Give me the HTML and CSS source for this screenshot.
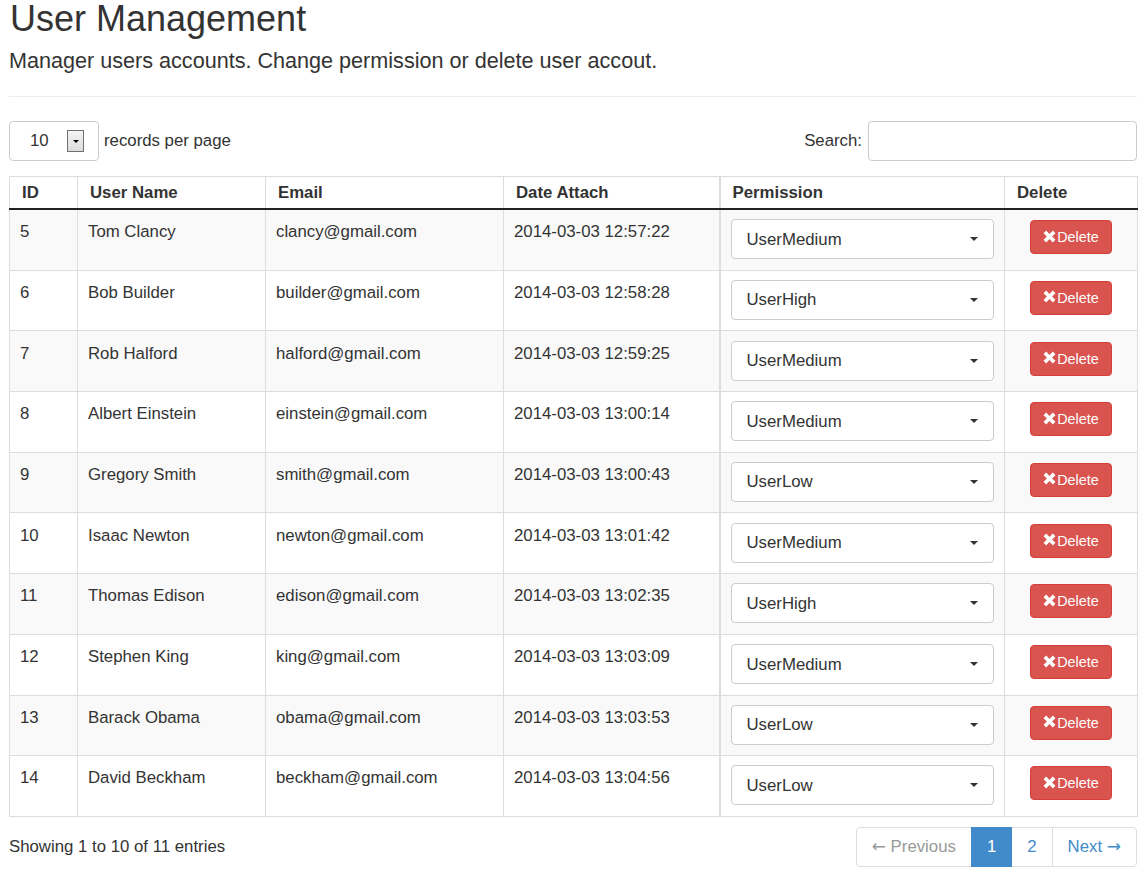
FILE: index.html
```html
<!DOCTYPE html>
<html>
<head>
<meta charset="utf-8">
<title>User Management</title>
<link rel="stylesheet" href="styles.css">
</head>
<body>
<div class="page">
  <h1 class="title">User Management</h1>
  <p class="lead">Manager users accounts. Change permission or delete user accout.</p>
  <hr class="divider">

  <div class="controls">
    <div class="length">
      <div class="length-select">
        <span class="length-value">10</span>
        <span class="length-btn"><span class="mini-caret"></span></span>
      </div>
      <span class="length-label">records per page</span>
    </div>
    <div class="search">
      <label class="search-label">Search:</label>
      <input class="search-input" type="text">
    </div>
  </div>

  <table class="users">
    <colgroup>
      <col class="c-id"><col class="c-name"><col class="c-email"><col class="c-date"><col class="c-perm"><col class="c-del">
    </colgroup>
    <thead>
      <tr><th>ID</th><th>User Name</th><th>Email</th><th>Date Attach</th><th class="perm">Permission</th><th>Delete</th></tr>
    </thead>
    <tbody>
      <tr><td>5</td><td>Tom Clancy</td><td>clancy@gmail.com</td><td>2014-03-03 12:57:22</td><td class="perm"><div class="pselect"><span>UserMedium</span><span class="caret"></span></div></td><td class="del"><button class="btn-del"><svg class="x" viewBox="0 0 12 12"><path d="M0.5 2.9 L2.9 0.5 L6 3.6 L9.1 0.5 L11.5 2.9 L8.4 6 L11.5 9.1 L9.1 11.5 L6 8.4 L2.9 11.5 L0.5 9.1 L3.6 6 Z"/></svg>Delete</button></td></tr>
      <tr><td>6</td><td>Bob Builder</td><td>builder@gmail.com</td><td>2014-03-03 12:58:28</td><td class="perm"><div class="pselect"><span>UserHigh</span><span class="caret"></span></div></td><td class="del"><button class="btn-del"><svg class="x" viewBox="0 0 12 12"><path d="M0.5 2.9 L2.9 0.5 L6 3.6 L9.1 0.5 L11.5 2.9 L8.4 6 L11.5 9.1 L9.1 11.5 L6 8.4 L2.9 11.5 L0.5 9.1 L3.6 6 Z"/></svg>Delete</button></td></tr>
      <tr><td>7</td><td>Rob Halford</td><td>halford@gmail.com</td><td>2014-03-03 12:59:25</td><td class="perm"><div class="pselect"><span>UserMedium</span><span class="caret"></span></div></td><td class="del"><button class="btn-del"><svg class="x" viewBox="0 0 12 12"><path d="M0.5 2.9 L2.9 0.5 L6 3.6 L9.1 0.5 L11.5 2.9 L8.4 6 L11.5 9.1 L9.1 11.5 L6 8.4 L2.9 11.5 L0.5 9.1 L3.6 6 Z"/></svg>Delete</button></td></tr>
      <tr><td>8</td><td>Albert Einstein</td><td>einstein@gmail.com</td><td>2014-03-03 13:00:14</td><td class="perm"><div class="pselect"><span>UserMedium</span><span class="caret"></span></div></td><td class="del"><button class="btn-del"><svg class="x" viewBox="0 0 12 12"><path d="M0.5 2.9 L2.9 0.5 L6 3.6 L9.1 0.5 L11.5 2.9 L8.4 6 L11.5 9.1 L9.1 11.5 L6 8.4 L2.9 11.5 L0.5 9.1 L3.6 6 Z"/></svg>Delete</button></td></tr>
      <tr><td>9</td><td>Gregory Smith</td><td>smith@gmail.com</td><td>2014-03-03 13:00:43</td><td class="perm"><div class="pselect"><span>UserLow</span><span class="caret"></span></div></td><td class="del"><button class="btn-del"><svg class="x" viewBox="0 0 12 12"><path d="M0.5 2.9 L2.9 0.5 L6 3.6 L9.1 0.5 L11.5 2.9 L8.4 6 L11.5 9.1 L9.1 11.5 L6 8.4 L2.9 11.5 L0.5 9.1 L3.6 6 Z"/></svg>Delete</button></td></tr>
      <tr><td>10</td><td>Isaac Newton</td><td>newton@gmail.com</td><td>2014-03-03 13:01:42</td><td class="perm"><div class="pselect"><span>UserMedium</span><span class="caret"></span></div></td><td class="del"><button class="btn-del"><svg class="x" viewBox="0 0 12 12"><path d="M0.5 2.9 L2.9 0.5 L6 3.6 L9.1 0.5 L11.5 2.9 L8.4 6 L11.5 9.1 L9.1 11.5 L6 8.4 L2.9 11.5 L0.5 9.1 L3.6 6 Z"/></svg>Delete</button></td></tr>
      <tr><td>11</td><td>Thomas Edison</td><td>edison@gmail.com</td><td>2014-03-03 13:02:35</td><td class="perm"><div class="pselect"><span>UserHigh</span><span class="caret"></span></div></td><td class="del"><button class="btn-del"><svg class="x" viewBox="0 0 12 12"><path d="M0.5 2.9 L2.9 0.5 L6 3.6 L9.1 0.5 L11.5 2.9 L8.4 6 L11.5 9.1 L9.1 11.5 L6 8.4 L2.9 11.5 L0.5 9.1 L3.6 6 Z"/></svg>Delete</button></td></tr>
      <tr><td>12</td><td>Stephen King</td><td>king@gmail.com</td><td>2014-03-03 13:03:09</td><td class="perm"><div class="pselect"><span>UserMedium</span><span class="caret"></span></div></td><td class="del"><button class="btn-del"><svg class="x" viewBox="0 0 12 12"><path d="M0.5 2.9 L2.9 0.5 L6 3.6 L9.1 0.5 L11.5 2.9 L8.4 6 L11.5 9.1 L9.1 11.5 L6 8.4 L2.9 11.5 L0.5 9.1 L3.6 6 Z"/></svg>Delete</button></td></tr>
      <tr><td>13</td><td>Barack Obama</td><td>obama@gmail.com</td><td>2014-03-03 13:03:53</td><td class="perm"><div class="pselect"><span>UserLow</span><span class="caret"></span></div></td><td class="del"><button class="btn-del"><svg class="x" viewBox="0 0 12 12"><path d="M0.5 2.9 L2.9 0.5 L6 3.6 L9.1 0.5 L11.5 2.9 L8.4 6 L11.5 9.1 L9.1 11.5 L6 8.4 L2.9 11.5 L0.5 9.1 L3.6 6 Z"/></svg>Delete</button></td></tr>
      <tr><td>14</td><td>David Beckham</td><td>beckham@gmail.com</td><td>2014-03-03 13:04:56</td><td class="perm"><div class="pselect"><span>UserLow</span><span class="caret"></span></div></td><td class="del"><button class="btn-del"><svg class="x" viewBox="0 0 12 12"><path d="M0.5 2.9 L2.9 0.5 L6 3.6 L9.1 0.5 L11.5 2.9 L8.4 6 L11.5 9.1 L9.1 11.5 L6 8.4 L2.9 11.5 L0.5 9.1 L3.6 6 Z"/></svg>Delete</button></td></tr>
    </tbody>
  </table>

  <div class="footer">
    <div class="info">Showing 1 to 10 of 11 entries</div>
    <ul class="pager">
      <li class="pg disabled"><span class="arrow">&larr;</span> Previous</li>
      <li class="pg active">1</li>
      <li class="pg">2</li>
      <li class="pg">Next <span class="arrow">&rarr;</span></li>
    </ul>
  </div>
</div>
</body>
</html>
```

FILE: styles.css
```css
html, body {
  margin: 0;
  padding: 0;
  background: #fff;
}
body {
  font-family: "Liberation Sans", Arial, sans-serif;
  font-size: 16.8px;
  color: #333;
}
.page {
  width: 1128px;
  padding: 0 7px 0 9px;
}
.title {
  margin: 0;
  font-size: 36px;
  font-weight: normal;
  line-height: 38px;
  padding-left: 1px;
}
.lead {
  margin: 8px 0 0;
  font-size: 21.6px;
  line-height: 30px;
}
.divider {
  margin: 20px 0 0;
  border: 0;
  border-top: 1px solid #eee;
  height: 0;
}
.controls {
  margin-top: 24px;
  display: flex;
  justify-content: space-between;
  align-items: center;
  height: 40px;
}
.length {
  display: flex;
  align-items: center;
}
.length-select {
  box-sizing: border-box;
  width: 90px;
  height: 40px;
  border: 1px solid #ccc;
  border-radius: 4px;
  display: flex;
  align-items: center;
  padding-left: 20px;
}
.length-value {
  width: 37px;
}
.length-btn {
  box-sizing: border-box;
  width: 17px;
  height: 22px;
  border: 1px solid #707070;
  background: linear-gradient(#f4f4f4, #dcdcdc);
  display: flex;
  align-items: center;
  justify-content: center;
}
.mini-caret {
  width: 0;
  height: 0;
  border-left: 3px solid transparent;
  border-right: 3px solid transparent;
  border-top: 3px solid #000;
}
.length-label {
  margin-left: 5px;
}
.search {
  display: flex;
  align-items: center;
}
.search-label {
  margin-right: 6px;
}
.search-input {
  box-sizing: border-box;
  width: 269px;
  height: 40px;
  border: 1px solid #ccc;
  border-radius: 4px;
  margin: 0;
  padding: 6px 12px;
  font: inherit;
}
.users {
  margin-top: 15px;
  width: 1128px;
  border-collapse: collapse;
  table-layout: fixed;
  border: 1px solid #ddd;
}
.c-id { width: 68px; }
.c-name { width: 188px; }
.c-email { width: 238px; }
.c-date { width: 216px; }
.c-perm { width: 285px; }
.c-del { width: 133px; }
.users th {
  text-align: left;
  font-weight: bold;
  padding: 7px 11px 7px 12px;
  line-height: 17px;
  border: 1px solid #ddd;
  border-bottom: 2px solid #222;
}
.users td {
  padding: 9.2px 10px 10.5px 10px;
  line-height: 25px;
  vertical-align: top;
  border: 1px solid #ddd;
}
.users .perm {
  border-left: 2px solid #ddd;
}
.users tbody tr:nth-child(odd) td {
  background: #f9f9f9;
}
.pselect {
  box-sizing: border-box;
  height: 40px;
  border: 1px solid #ccc;
  border-radius: 4px;
  background: #fff;
  display: flex;
  align-items: center;
  justify-content: space-between;
  padding: 0 15px 0 15px;
  line-height: 22px;
}
.pselect span:first-child {
  padding-top: 1px;
}
.caret {
  width: 0;
  height: 0;
  border-left: 4px solid transparent;
  border-right: 4px solid transparent;
  border-top: 4px solid #333;
}
.users td.del {
  text-align: center;
}
.btn-del {
  margin-top: 1px;
  vertical-align: top;
  box-sizing: border-box;
  height: 34px;
  padding: 0 12px 0 12px;
  border: 1px solid #d43f3a;
  border-radius: 4px;
  background: #d9534f;
  color: #fff;
  font-family: "Liberation Sans", Arial, sans-serif;
  font-size: 14.4px;
  line-height: 20px;
  display: inline-flex;
  align-items: center;
}
.x {
  width: 13px;
  height: 13px;
  fill: #fff;
  margin-right: 1px;
  margin-top: -2px;
}
.footer {
  margin-top: 10px;
  display: flex;
  justify-content: space-between;
  align-items: center;
}
.info {
  line-height: 22px;
}
.pager {
  list-style: none;
  margin: 0;
  padding: 0;
  display: flex;
}
.pg {
  padding: 8px 15px;
  line-height: 22px;
  border: 1px solid #ddd;
  margin-left: -1px;
  color: #428bca;
  background: #fff;
}
.arrow {
  font-family: "DejaVu Sans", sans-serif;
  font-size: 17px;
  line-height: 1;
}
.pg:first-child {
  margin-left: 0;
  border-radius: 4px 0 0 4px;
}
.pg:last-child {
  border-radius: 0 4px 4px 0;
}
.pg.disabled {
  color: #999;
}
.pg.active {
  background: #428bca;
  border-color: #428bca;
  color: #fff;
  position: relative;
}
```
